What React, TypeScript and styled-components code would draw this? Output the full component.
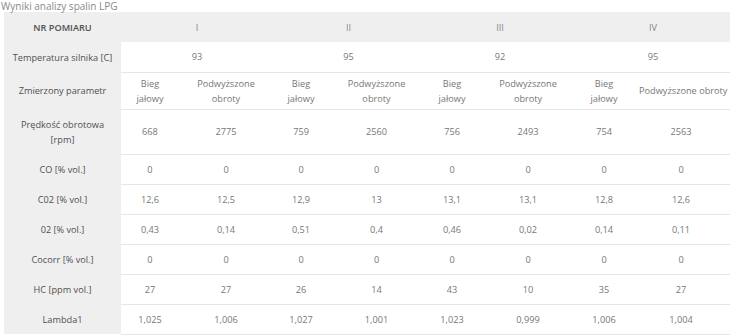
import * as React from "react";
import styled, { createGlobalStyle } from "styled-components";

const GlobalStyle = createGlobalStyle`
  html, body {
    margin: 0;
    padding: 0;
    background: #ffffff;
  }
  body {
    font-family: "Open Sans", "Liberation Sans", sans-serif;
    font-size: 9.2px;
    color: #777;
  }
`;

const Wrapper = styled.section`
  width: 730px;
  height: 335px;
  overflow: hidden;
`;

const Title = styled.div`
  height: 12px;
  line-height: 12px;
  padding-left: 1px;
  font-size: 10px;
  color: #8a8a8a;
  white-space: nowrap;
`;

const Table = styled.table`
  margin-left: 4px;
  width: 726px;
  table-layout: fixed;
  border-collapse: collapse;
  border-spacing: 0;
  line-height: 15px;
`;

const HeadRow = styled.tr`
  background: #efefef;
`;

const Label = styled.th<{ $head?: boolean }>`
  background: #efefef;
  padding: 7.5px 6px;
  text-align: center;
  vertical-align: middle;
  font-weight: ${(p) => (p.$head ? 600 : 400)};
  color: #505050;
`;

const LabelText = styled.div`
  display: flex;
  flex-wrap: wrap;
  justify-content: center;
  column-gap: 0.26em;
  text-align: center;
`;

const GroupHead = styled.th`
  padding: 7.5px 5px;
  text-align: center;
  font-weight: 400;
  color: #888;
`;

const Cell = styled.td<{ $nowrap?: boolean }>`
  padding: 3px 7px;
  text-align: center;
  vertical-align: middle;
  color: #777;
  border-bottom: 1px solid #e6e6e6;
  white-space: ${(p) => (p.$nowrap ? "nowrap" : "normal")};
`;

const widths = [117, 58, 94, 56, 95, 56, 96, 56, 98];

const groups = ["I", "II", "III", "IV"];
const temps = ["93", "95", "92", "95"];

const rows: { label: string[]; values: string[] }[] = [
  { label: ["Prędkość obrotowa", "[rpm]"], values: ["668", "2775", "759", "2560", "756", "2493", "754", "2563"] },
  { label: ["CO [% vol.]"], values: ["0", "0", "0", "0", "0", "0", "0", "0"] },
  { label: ["C02 [% vol.]"], values: ["12,6", "12,5", "12,9", "13", "13,1", "13,1", "12,8", "12,6"] },
  { label: ["02 [% vol.]"], values: ["0,43", "0,14", "0,51", "0,4", "0,46", "0,02", "0,14", "0,11"] },
  { label: ["Cocorr [% vol.]"], values: ["0", "0", "0", "0", "0", "0", "0", "0"] },
  { label: ["HC [ppm vol.]"], values: ["27", "27", "26", "14", "43", "10", "35", "27"] },
  { label: ["Lambda1"], values: ["1,025", "1,006", "1,027", "1,001", "1,023", "0,999", "1,006", "1,004"] },
];

function RowLabel({ parts, head }: { parts: string[]; head?: boolean }) {
  return (
    <Label $head={head}>
      <LabelText>
        {parts.map((p) => (
          <span key={p}>{p}</span>
        ))}
      </LabelText>
    </Label>
  );
}

export default function App() {
  return (
    <Wrapper>
      <GlobalStyle />
      <Title>Wyniki analizy spalin LPG</Title>
      <Table>
        <colgroup>
          {widths.map((w, i) => (
            <col key={i} style={{ width: w }} />
          ))}
        </colgroup>
        <thead>
          <HeadRow>
            <RowLabel head parts={["NR POMIARU"]} />
            {groups.map((g) => (
              <GroupHead key={g} colSpan={2}>
                {g}
              </GroupHead>
            ))}
          </HeadRow>
        </thead>
        <tbody>
          <tr>
            <RowLabel parts={["Temperatura silnika [C]"]} />
            {temps.map((t, i) => (
              <Cell key={i} colSpan={2}>
                {t}
              </Cell>
            ))}
          </tr>
          <tr>
            <RowLabel parts={["Zmierzony parametr"]} />
            {groups.map((g, i) => (
              <React.Fragment key={g}>
                <Cell>Bieg jałowy</Cell>
                <Cell $nowrap={i === groups.length - 1}>Podwyższone obroty</Cell>
              </React.Fragment>
            ))}
          </tr>
          {rows.map((r) => (
            <tr key={r.label.join(" ")}>
              <RowLabel parts={r.label} />
              {r.values.map((v, i) => (
                <Cell key={i}>{v}</Cell>
              ))}
            </tr>
          ))}
        </tbody>
      </Table>
    </Wrapper>
  );
}
